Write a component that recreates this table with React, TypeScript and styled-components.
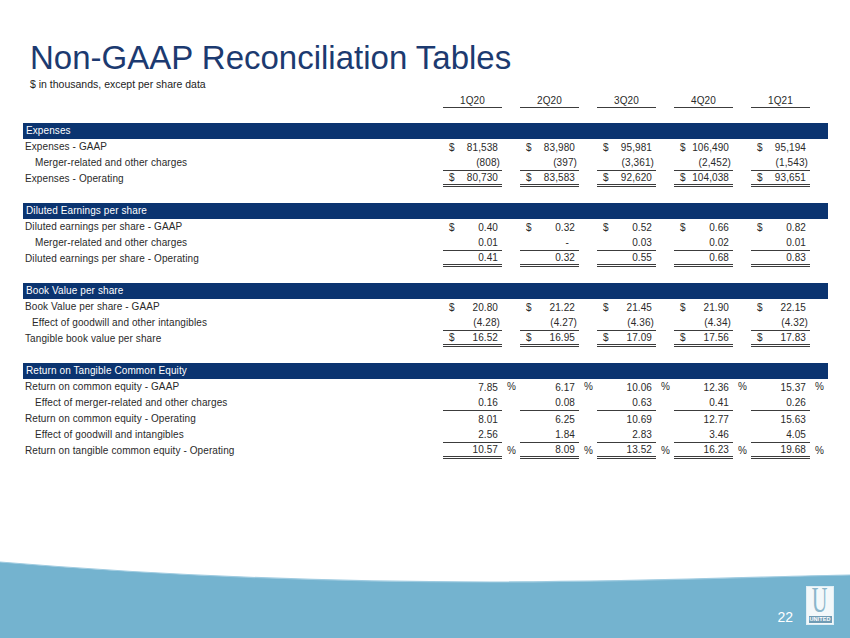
import React from "react";
import styled, { createGlobalStyle, css } from "styled-components";

const GlobalStyle = createGlobalStyle`
  html, body {
    margin: 0;
    padding: 0;
    background: #fff;
  }
  body {
    font-family: "Liberation Sans", Arial, sans-serif;
  }
`;

const NAVY = "#0b3470";
const TEXT = "#2a2a2a";
const RULE = "#3c3c3c";
const SKY = "#74b3cf";

const GRID = "420px repeat(5, 59px 18px)";

const Slide = styled.div`
  position: relative;
  width: 850px;
  height: 638px;
  display: flex;
  flex-direction: column;
  overflow: hidden;
  background: #fff;
`;

const Heading = styled.header`
  padding: 40px 0 0 30px;
`;

const Title = styled.h1`
  margin: 0;
  font-size: 33px;
  line-height: 36px;
  font-weight: 400;
  color: #1c3a70;
`;

const Subtitle = styled.p`
  margin: 2px 0 0;
  font-size: 10.5px;
  line-height: 12px;
  color: #222;
`;

const Table = styled.div`
  padding-left: 23px;
  margin-top: 2px;
  font-size: 10px;
  letter-spacing: 0.1px;
  color: ${TEXT};
`;

const Row = styled.div`
  display: grid;
  grid-template-columns: ${GRID};
  height: 16px;
`;

const QuarterRow = styled(Row)`
  margin-bottom: 15px;
`;

const Quarter = styled.div`
  box-sizing: border-box;
  height: 16px;
  padding-top: 2px;
  text-align: center;
  line-height: 13px;
  border-bottom: 1px solid ${RULE};
`;

const Section = styled.section`
  margin-bottom: 16px;
  &:last-child {
    margin-bottom: 0;
  }
`;

const Band = styled.div`
  width: 805px;
  height: 16px;
  line-height: 16px;
  background: ${NAVY};
  color: #fff;
  padding-left: 3px;
  box-sizing: border-box;
`;

const Label = styled.div<{ $indent: number }>`
  line-height: 16px;
  padding-left: ${({ $indent }) => 2 + $indent}px;
  white-space: nowrap;
`;

type Rule = "none" | "single" | "double";

const Value = styled.div<{ $rule: Rule; $pad: number }>`
  box-sizing: border-box;
  height: 16px;
  display: flex;
  justify-content: space-between;
  align-items: center;
  padding: 0 ${({ $pad }) => $pad}px 0 6px;
  white-space: nowrap;
  ${({ $rule }) =>
    $rule === "single" &&
    css`
      border-bottom: 1px solid ${RULE};
    `}
  ${({ $rule }) =>
    $rule === "double" &&
    css`
      border-bottom: 3px double ${RULE};
    `}
`;

const Suffix = styled.div`
  line-height: 16px;
  padding-left: 5px;
`;

const Footer = styled.footer`
  position: relative;
  margin-top: auto;
  height: 81px;
  display: flex;
  justify-content: flex-end;
  align-items: flex-end;
  gap: 13px;
  padding: 0 16px 13px 0;
  box-sizing: border-box;
`;

const Wave = styled.svg`
  position: absolute;
  inset: 0;
  width: 100%;
  height: 100%;
  z-index: 0;
`;

const PageNumber = styled.span`
  position: relative;
  z-index: 1;
  font-size: 14px;
  line-height: 16px;
  color: #fff;
`;

const Logo = styled.div`
  position: relative;
  z-index: 1;
  width: 28px;
  height: 39px;
  box-sizing: border-box;
  background: #f3f8fa;
  border: 1px solid #dfeef5;
  display: flex;
  flex-direction: column;
  align-items: center;
  overflow: hidden;
`;

const LogoLetter = styled.span`
  display: block;
  height: 27px;
  font-family: "Liberation Serif", "Times New Roman", serif;
  font-size: 35px;
  line-height: 27px;
  color: #8ab6cb;
  transform: scaleX(0.62);
`;

const LogoWord = styled.span`
  display: block;
  width: 23px;
  height: 7px;
  margin-top: 2px;
  background: #6f9bb4;
  color: #fff;
  font-size: 5.5px;
  font-weight: 700;
  line-height: 7px;
  text-align: center;
  letter-spacing: 0.1px;
`;

type Line = {
  label: string;
  values: string[];
  indent?: number;
  dollar?: boolean;
  percent?: boolean;
  rule?: Rule;
};

type Block = { title: string; lines: Line[] };

const quarters = ["1Q20", "2Q20", "3Q20", "4Q20", "1Q21"];

const blocks: Block[] = [
  {
    title: "Expenses",
    lines: [
      { label: "Expenses - GAAP", dollar: true, values: ["81,538", "83,980", "95,981", "106,490", "95,194"] },
      { label: "Merger-related and other charges", indent: 10, rule: "single", values: ["(808)", "(397)", "(3,361)", "(2,452)", "(1,543)"] },
      { label: "Expenses - Operating", dollar: true, rule: "double", values: ["80,730", "83,583", "92,620", "104,038", "93,651"] },
    ],
  },
  {
    title: "Diluted Earnings per share",
    lines: [
      { label: "Diluted earnings per share - GAAP", dollar: true, values: ["0.40", "0.32", "0.52", "0.66", "0.82"] },
      { label: "Merger-related and other charges", indent: 10, rule: "single", values: ["0.01", "-", "0.03", "0.02", "0.01"] },
      { label: "Diluted earnings per share - Operating", rule: "double", values: ["0.41", "0.32", "0.55", "0.68", "0.83"] },
    ],
  },
  {
    title: "Book Value per share",
    lines: [
      { label: "Book Value per share - GAAP", dollar: true, values: ["20.80", "21.22", "21.45", "21.90", "22.15"] },
      { label: "Effect of goodwill and other intangibles", indent: 7, rule: "single", values: ["(4.28)", "(4.27)", "(4.36)", "(4.34)", "(4.32)"] },
      { label: "Tangible book value per share", dollar: true, rule: "double", values: ["16.52", "16.95", "17.09", "17.56", "17.83"] },
    ],
  },
  {
    title: "Return on Tangible Common Equity",
    lines: [
      { label: "Return on common equity - GAAP", percent: true, values: ["7.85", "6.17", "10.06", "12.36", "15.37"] },
      { label: "Effect of merger-related and other charges", indent: 10, rule: "single", values: ["0.16", "0.08", "0.63", "0.41", "0.26"] },
      { label: "Return on common equity - Operating", values: ["8.01", "6.25", "10.69", "12.77", "15.63"] },
      { label: "Effect of goodwill and intangibles", indent: 10, rule: "single", values: ["2.56", "1.84", "2.83", "3.46", "4.05"] },
      { label: "Return on tangible common equity - Operating", percent: true, rule: "double", values: ["10.57", "8.09", "13.52", "16.23", "19.68"] },
    ],
  },
];

const padFor = (v: string) => (v.startsWith("(") ? 2 : v === "-" ? 10 : 4);

const TableLine = ({ line }: { line: Line }) => (
  <Row>
    <Label $indent={line.indent ?? 0}>{line.label}</Label>
    {line.values.map((v, i) => (
      <React.Fragment key={i}>
        <Value $rule={line.rule ?? "none"} $pad={padFor(v)}>
          <span>{line.dollar ? "$" : ""}</span>
          <span>{v}</span>
        </Value>
        <Suffix>{line.percent ? "%" : ""}</Suffix>
      </React.Fragment>
    ))}
  </Row>
);

const UnitedLogo = () => (
  <Logo>
    <LogoLetter>U</LogoLetter>
    <LogoWord>UNITED</LogoWord>
  </Logo>
);

const App = () => {
  return (
    <>
      <GlobalStyle />
      <Slide>
        <Heading>
          <Title>Non-GAAP Reconciliation Tables</Title>
          <Subtitle>$ in thousands, except per share data</Subtitle>
        </Heading>
        <Table>
          <QuarterRow>
            <div />
            {quarters.map((q) => (
              <React.Fragment key={q}>
                <Quarter>{q}</Quarter>
                <div />
              </React.Fragment>
            ))}
          </QuarterRow>
          {blocks.map((b) => (
            <Section key={b.title}>
              <Band>{b.title}</Band>
              {b.lines.map((l) => (
                <TableLine key={l.label} line={l} />
              ))}
            </Section>
          ))}
        </Table>
        <Footer>
          <Wave viewBox="0 0 850 81" preserveAspectRatio="none">
            <path d="M0 5 C 180 20, 340 25, 490 25 C 640 25, 780 19, 850 18 L 850 81 L 0 81 Z" fill={SKY} />
            <path d="M0 5 C 180 20, 340 25, 490 25 C 640 25, 780 19, 850 18" fill="none" stroke="#9fcbe0" strokeWidth="1.2" />
          </Wave>
          <PageNumber>22</PageNumber>
          <UnitedLogo />
        </Footer>
      </Slide>
    </>
  );
};

export default App;
